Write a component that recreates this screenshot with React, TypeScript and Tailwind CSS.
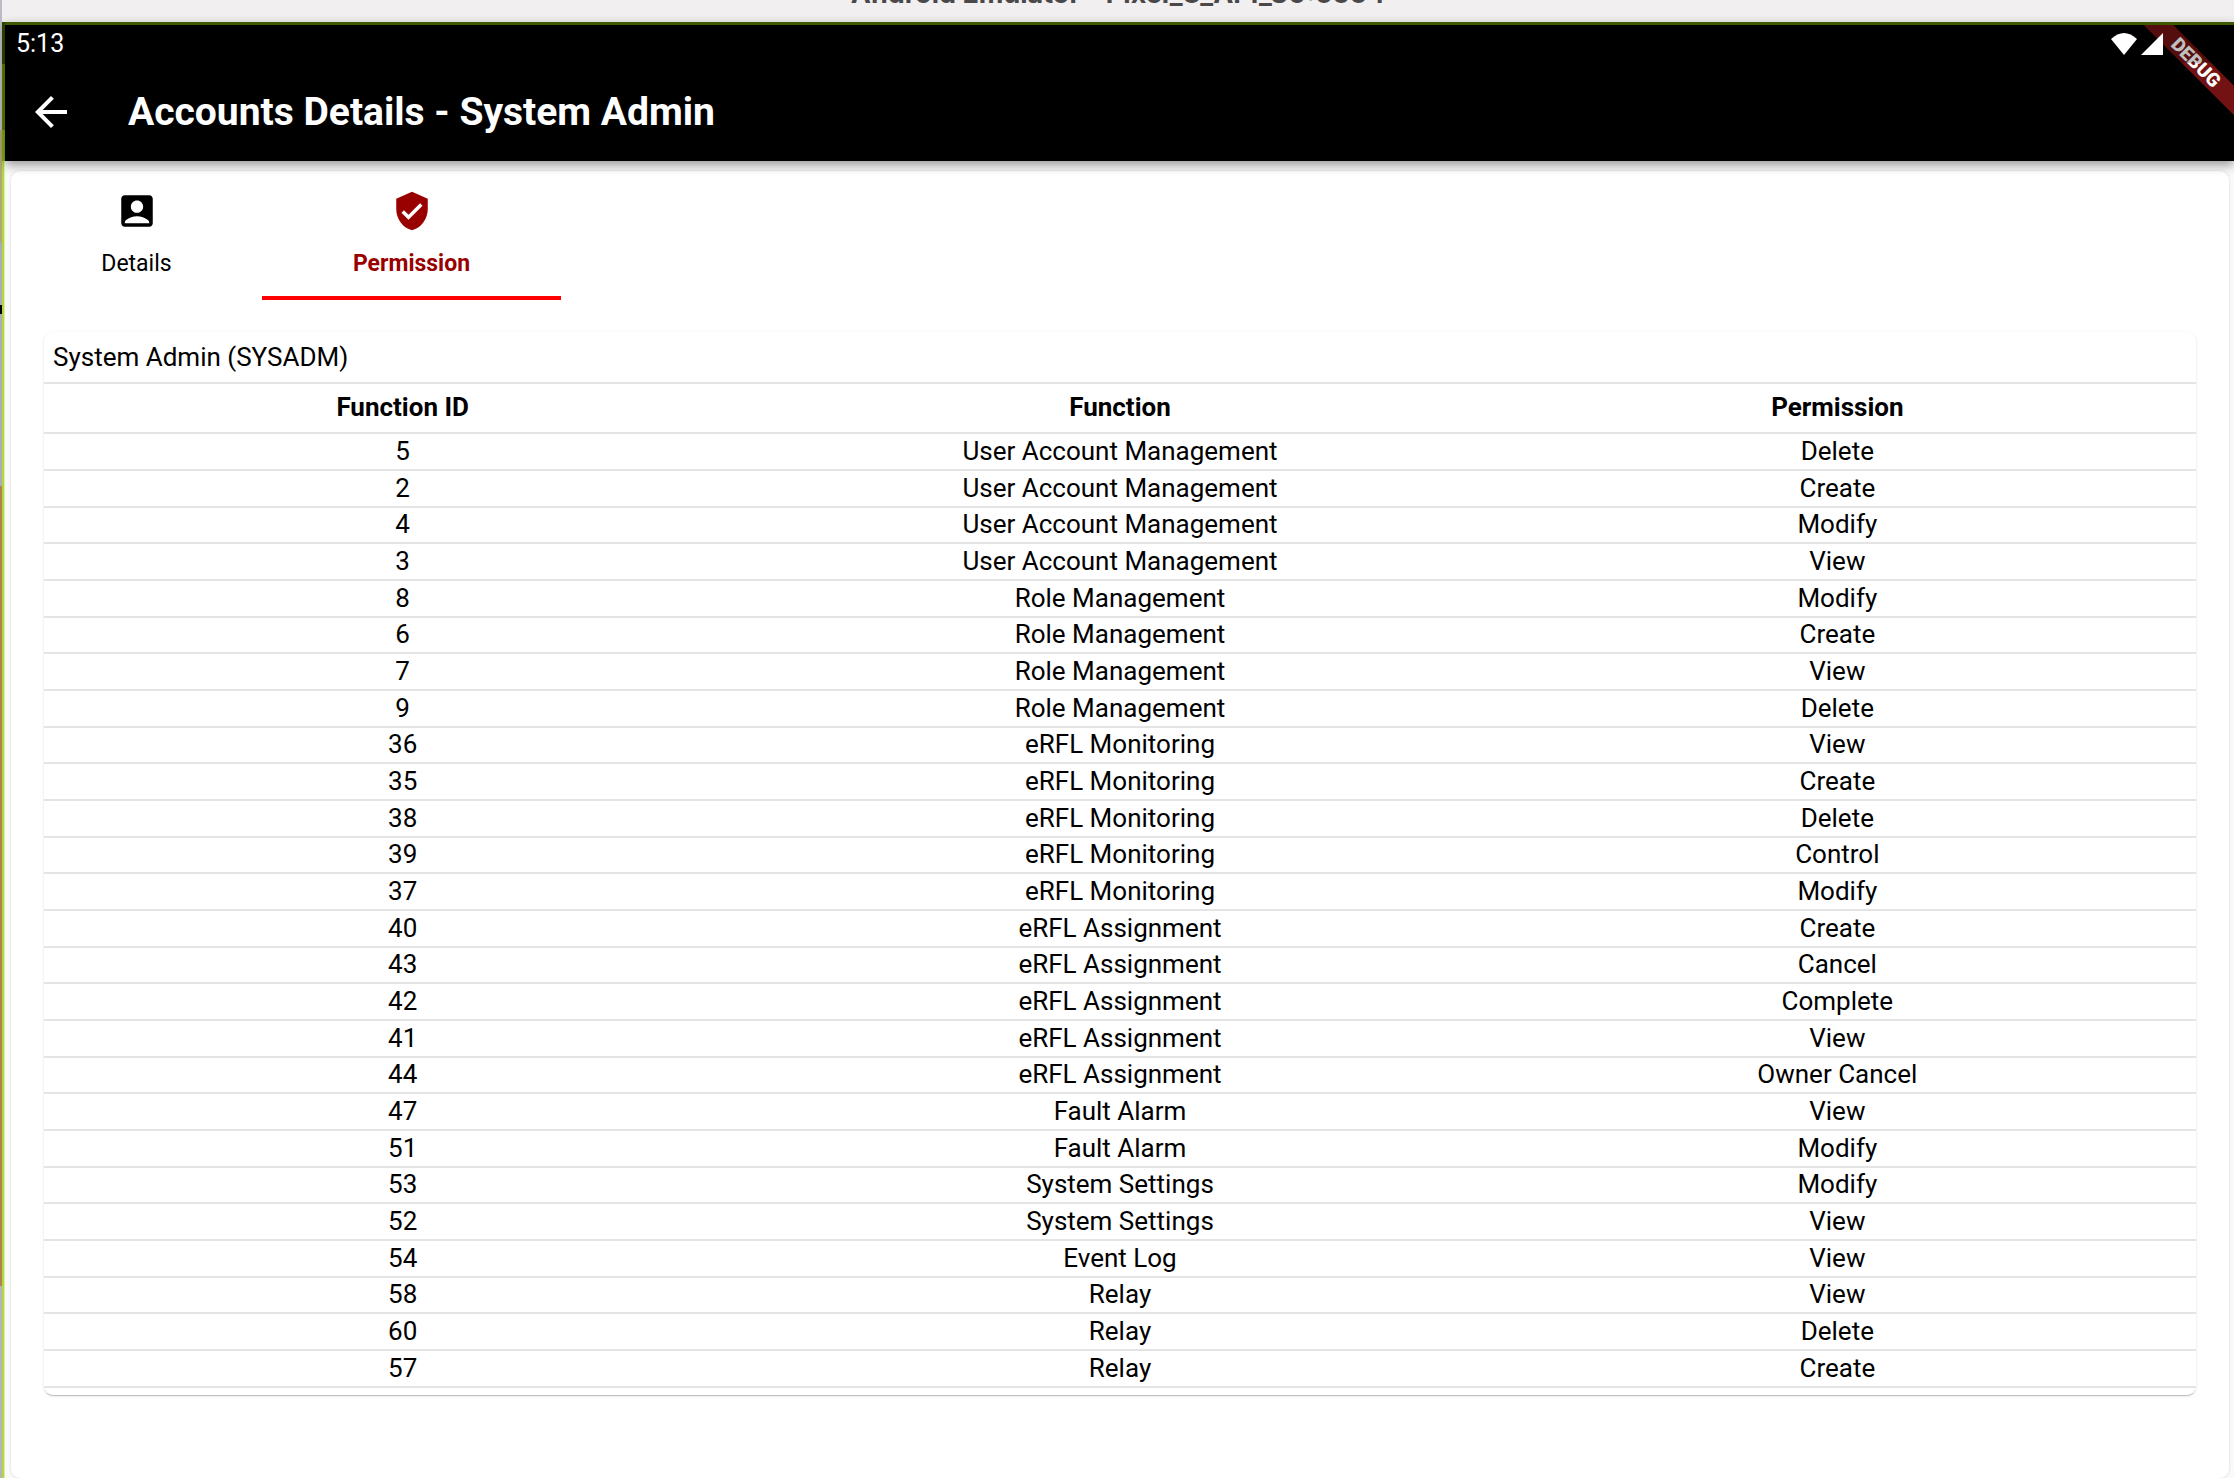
import React from "react";
import { MdAccountBox, MdArrowBack, MdVerifiedUser } from "react-icons/md";

const permissions: [number, string, string][] = [
  [5, "User Account Management", "Delete"],
  [2, "User Account Management", "Create"],
  [4, "User Account Management", "Modify"],
  [3, "User Account Management", "View"],
  [8, "Role Management", "Modify"],
  [6, "Role Management", "Create"],
  [7, "Role Management", "View"],
  [9, "Role Management", "Delete"],
  [36, "eRFL Monitoring", "View"],
  [35, "eRFL Monitoring", "Create"],
  [38, "eRFL Monitoring", "Delete"],
  [39, "eRFL Monitoring", "Control"],
  [37, "eRFL Monitoring", "Modify"],
  [40, "eRFL Assignment", "Create"],
  [43, "eRFL Assignment", "Cancel"],
  [42, "eRFL Assignment", "Complete"],
  [41, "eRFL Assignment", "View"],
  [44, "eRFL Assignment", "Owner Cancel"],
  [47, "Fault Alarm", "View"],
  [51, "Fault Alarm", "Modify"],
  [53, "System Settings", "Modify"],
  [52, "System Settings", "View"],
  [54, "Event Log", "View"],
  [58, "Relay", "View"],
  [60, "Relay", "Delete"],
  [57, "Relay", "Create"],
];

function WindowTitle() {
  return (
    <div className="flex h-[22px] items-end justify-center overflow-hidden bg-[#f1eff0] pb-3 font-[Inter,sans-serif] text-[27px] leading-8 font-bold text-[#4b484a]">
      Android Emulator - Pixel_C_API_30:5554
    </div>
  );
}

function StatusBar() {
  return (
    <div className="relative z-10 flex h-[38px] items-center justify-between bg-black/25 pr-[71px] pl-[11px] text-[25px] text-white">
      <span>5:13</span>
      <svg viewBox="0 0 52 22" className="h-[22px] w-[52px] fill-white" aria-label="Wi-Fi and signal">
        <path d="M0 6Q13-6 26 6L13 22Z" />
        <path d="M52 0V22H30Z" />
      </svg>
    </div>
  );
}

function AppBar() {
  return (
    <header className="relative z-10 overflow-hidden border-t-[3px] border-[#3d5a00] bg-black shadow-[0_4px_10px_rgba(0,0,0,0.4)]">
      <StatusBar />
      <div className="flex h-[98px] items-center gap-[53px] pl-[22px] text-white">
        <button type="button" aria-label="Back">
          <MdArrowBack className="size-12" />
        </button>
        <h1 className="text-[39px] leading-[48px] font-bold">Accounts Details - System Admin</h1>
      </div>
      <div className="absolute top-[27px] -right-[62px] w-[200px] rotate-45 bg-[#721212] text-center text-[19px] leading-[21px] font-black text-white">
        DEBUG
      </div>
    </header>
  );
}

function Tabs() {
  return (
    <div role="tablist" className="flex h-[129px] text-[23px] leading-7">
      <button type="button" role="tab" aria-selected="false" className="flex w-[251px] flex-col items-center pt-[19px]">
        <MdAccountBox className="size-[42px]" />
        <span className="mt-[18px]">Details</span>
      </button>
      <button
        type="button"
        role="tab"
        aria-selected="true"
        className="flex w-[299px] flex-col items-center border-b-4 border-[#ff0000] pt-[19px] font-bold text-[#990000]"
      >
        <MdVerifiedUser className="size-[42px]" />
        <span className="mt-[18px]">Permission</span>
      </button>
    </div>
  );
}

function PermissionTable() {
  return (
    <section className="mx-[33px] mt-8 overflow-hidden rounded-[9px] bg-white pb-[7px] text-[26px] leading-[30px] shadow-[0_2px_1px_-1px_rgba(0,0,0,0.2),0_1px_3px_rgba(0,0,0,0.12)]">
      <h2 className="flex h-[50px] items-center px-[9px]">System Admin (SYSADM)</h2>
      <table className="w-full table-fixed border-separate border-spacing-0 border-t-2 border-[#e4e4e4] text-center">
        <thead>
          <tr className="h-[50px]">
            <th className="border-b-2 border-[#e4e4e4] p-0 pb-0.5 font-bold">Function ID</th>
            <th className="border-b-2 border-[#e4e4e4] p-0 pb-0.5 font-bold">Function</th>
            <th className="border-b-2 border-[#e4e4e4] p-0 pb-0.5 font-bold">Permission</th>
          </tr>
        </thead>
        <tbody>
          {permissions.map(([id, name, access]) => (
            <tr key={id} className="h-[37px] nth-[3n]:h-9">
              <td className="border-b-2 border-[#e4e4e4] p-0 pb-0.5">{id}</td>
              <td className="border-b-2 border-[#e4e4e4] p-0 pb-0.5">{name}</td>
              <td className="border-b-2 border-[#e4e4e4] p-0 pb-0.5">{access}</td>
            </tr>
          ))}
        </tbody>
      </table>
    </section>
  );
}

function DesktopEdge() {
  return (
    <div className="flex w-[2px] shrink-0 flex-col">
      <div className="h-[130px] bg-[#bcbcc4]" />
      <div className="h-[113px] bg-[#b0a878]" />
      <div className="h-[62px] bg-[#acacb8]" />
      <div className="h-[9px] bg-black" />
      <div className="h-[172px] bg-[#acacb8]" />
      <div className="h-[800px] bg-[#b08050]" />
    </div>
  );
}

function WindowEdge() {
  return (
    <div className="flex w-[3px] shrink-0 flex-col">
      <div className="h-[42px] bg-[#2f4800]" />
      <div className="h-[66px] bg-[#5c8000]" />
      <div className="h-[31px] bg-[#86ac10]" />
      <div className="grow border-r border-[#dcefa8] bg-[#b0d840]" />
    </div>
  );
}

export default function App() {
  return (
    <div className="flex min-h-screen bg-[#b4b4b8] font-[Roboto,sans-serif] text-black">
      <DesktopEdge />
      <div className="flex min-w-0 grow flex-col">
        <WindowTitle />
        <div className="flex grow">
          <WindowEdge />
          <div className="flex min-w-0 grow flex-col bg-[#fafafa]">
            <AppBar />
            <main className="mt-[10px] mr-[5px] ml-[6px] grow rounded-[9px] bg-white shadow-[0_0_3px_rgba(0,0,0,0.15)]">
              <Tabs />
              <PermissionTable />
            </main>
          </div>
        </div>
      </div>
    </div>
  );
}
